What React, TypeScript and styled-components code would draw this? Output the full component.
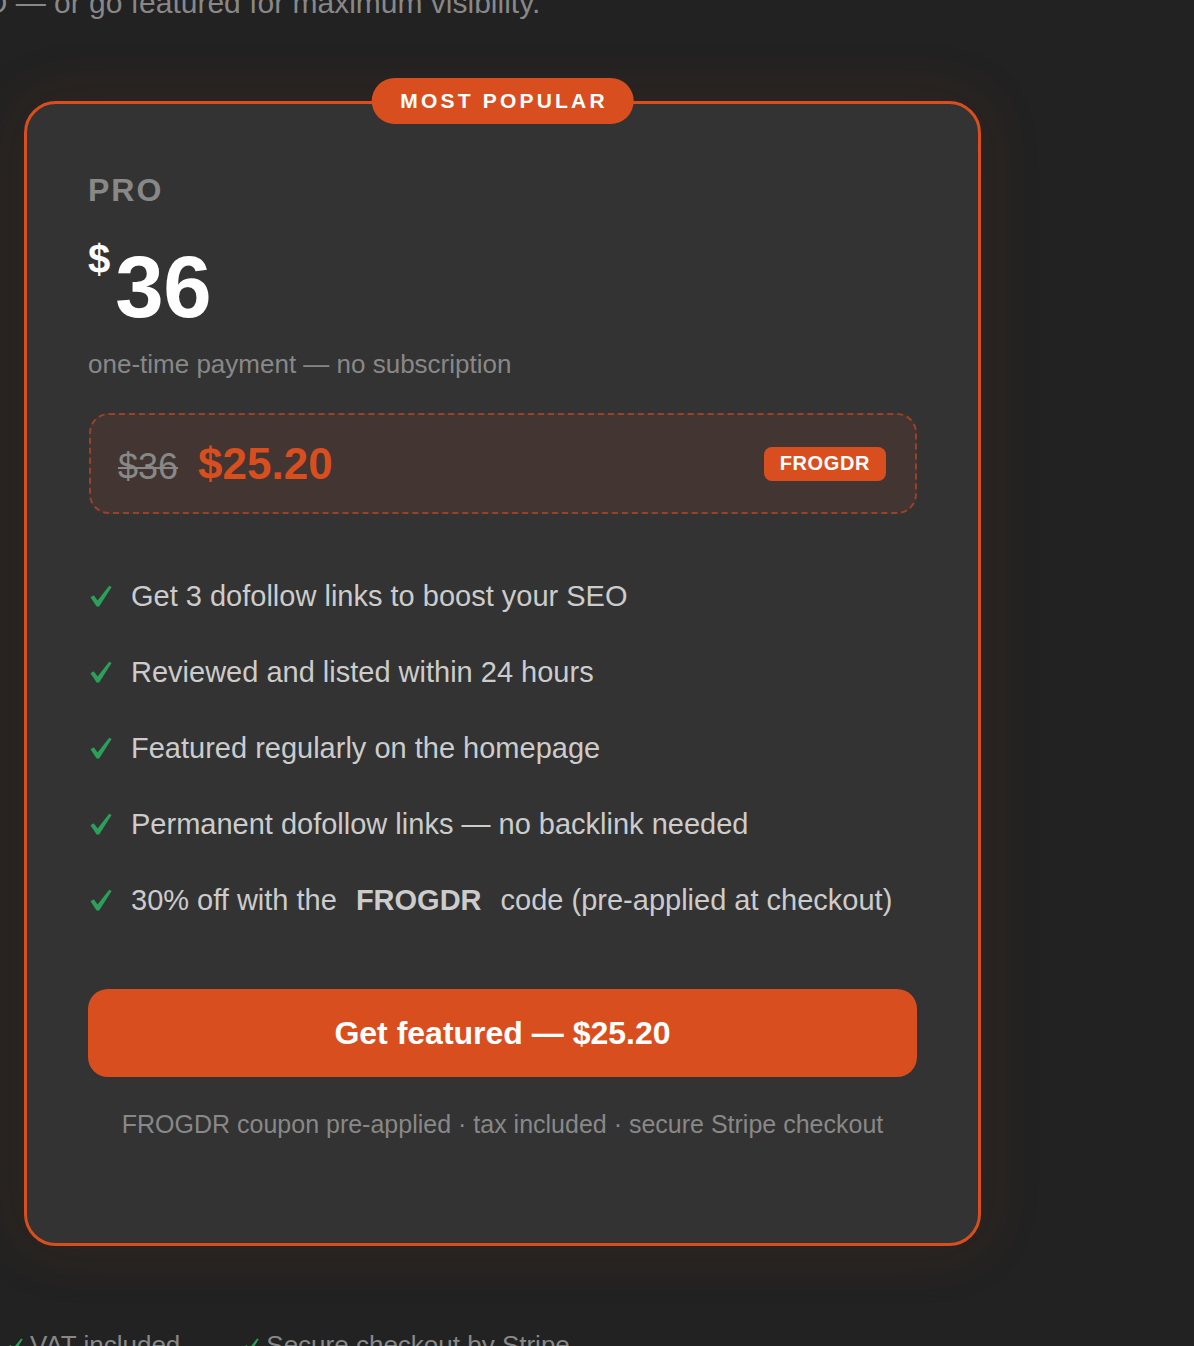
import React from 'react';
import styled, { createGlobalStyle } from 'styled-components';

const ORANGE = '#d94e1f';
const GREEN = '#2c9f5a';

const GlobalStyle = createGlobalStyle`
  html, body {
    margin: 0;
    padding: 0;
    background: #222222;
    overflow: hidden;
  }

  body {
    font-family: 'Liberation Sans', Arial, Helvetica, sans-serif;
    color: #cccccc;
  }
`;

const features = [
  'Get 3 dofollow links to boost your SEO',
  'Reviewed and listed within 24 hours',
  'Featured regularly on the homepage',
  'Permanent dofollow links — no backlink needed',
];

const Check: React.FC<{ size?: number }> = ({ size = 22 }) => (
  <svg width={size} height={size} viewBox="0 0 22 22" aria-hidden="true">
    <path
      d="M0.5 12.2 L3.8 10.2 L7.6 15.4 L19.2 0.8 L21.6 2 L9.2 21.4 L6.6 21.4 Z"
      fill={GREEN}
    />
  </svg>
);

const App: React.FC = () => (
  <>
    <GlobalStyle />
    <Page>
      <Lead>O — or go featured for maximum visibility.</Lead>

      <Card>
        <Badge>MOST POPULAR</Badge>

        <Tier>PRO</Tier>

        <PriceRow>
          <Currency>$</Currency>
          <Amount>36</Amount>
        </PriceRow>

        <Note>one-time payment — no subscription</Note>

        <Coupon>
          <Prices>
            <OldPrice>$36</OldPrice>
            <NewPrice>$25.20</NewPrice>
          </Prices>
          <Code>FROGDR</Code>
        </Coupon>

        <Features>
          {features.map((text) => (
            <Feature key={text}>
              <Check />
              <span>{text}</span>
            </Feature>
          ))}
          <Feature>
            <Check />
            <span>
              30% off with the <strong>FROGDR</strong> code (pre-applied at
              checkout)
            </span>
          </Feature>
        </Features>

        <CTA type="button">Get featured — $25.20</CTA>

        <Fine>
          FROGDR coupon pre-applied · tax included · secure Stripe checkout
        </Fine>
      </Card>

      <Assurances>
        <Assurance>
          <Check size={15} />
          <span>VAT included</span>
        </Assurance>
        <Assurance>
          <Check size={15} />
          <span>Secure checkout by Stripe</span>
        </Assurance>
      </Assurances>
    </Page>
  </>
);

const Page = styled.main`
  display: flex;
  flex-direction: column;
  align-items: flex-start;
  width: 1194px;
  height: 1346px;
  overflow: hidden;
`;

const Lead = styled.p`
  flex-shrink: 0;
  margin: -12px 0 0 -16px;
  font-size: 30px;
  line-height: 1;
  color: #888888;
  white-space: nowrap;
`;

const Card = styled.section`
  position: relative;
  flex-shrink: 0;
  box-sizing: border-box;
  width: 957px;
  height: 1145px;
  margin: 83px 0 0 24px;
  padding: 70px 61px 0;
  display: flex;
  flex-direction: column;
  background: #333333;
  border: 3px solid ${ORANGE};
  border-radius: 32px;
  box-shadow: 0 0 60px 12px rgba(217, 78, 31, 0.07);
`;

const Badge = styled.span`
  position: absolute;
  top: -26px;
  left: 50%;
  transform: translateX(-50%);
  box-sizing: border-box;
  height: 46px;
  padding: 0 26px 0 29px;
  display: flex;
  align-items: center;
  background: ${ORANGE};
  border-radius: 23px;
  color: #ffffff;
  font-size: 21px;
  font-weight: 700;
  letter-spacing: 3.2px;
  white-space: nowrap;
`;

const Tier = styled.h3`
  margin: 0;
  font-size: 32px;
  line-height: 1;
  font-weight: 700;
  letter-spacing: 2px;
  color: #888888;
`;

const PriceRow = styled.div`
  display: flex;
  align-items: flex-start;
  margin-top: 33px;
  color: #ffffff;
  font-weight: 700;
`;

const Currency = styled.span`
  font-size: 40px;
  line-height: 1;
  margin-right: 5px;
`;

const Amount = styled.span`
  margin-top: 4px;
  font-size: 87px;
  line-height: 1;
  letter-spacing: -0.5px;
`;

const Note = styled.p`
  margin: 21px 0 0;
  font-size: 26px;
  line-height: 1;
  color: #888888;
`;

const Coupon = styled.div`
  box-sizing: border-box;
  height: 101px;
  margin: 36px 0 0 1px;
  padding: 0 29px 0 27px;
  display: flex;
  align-items: center;
  justify-content: space-between;
  background: #433532;
  border: 2px dashed #9a4228;
  border-radius: 20px;
`;

const Prices = styled.div`
  display: flex;
  align-items: baseline;
  gap: 20px;
`;

const OldPrice = styled.s`
  font-size: 36px;
  color: #888888;
  text-decoration-thickness: 2px;
`;

const NewPrice = styled.span`
  font-size: 44px;
  font-weight: 700;
  color: ${ORANGE};
`;

const Code = styled.span`
  box-sizing: border-box;
  height: 34px;
  padding: 0 16px;
  display: flex;
  align-items: center;
  background: ${ORANGE};
  border-radius: 8px;
  color: #ffffff;
  font-size: 20px;
  font-weight: 700;
  letter-spacing: 0.6px;
`;

const Features = styled.ul`
  list-style: none;
  margin: 62px 0 0;
  padding: 0;
  display: flex;
  flex-direction: column;
  gap: 36px;
`;

const Feature = styled.li`
  display: flex;
  align-items: center;
  gap: 19px;
  height: 40px;
  padding-left: 2px;
  font-size: 29px;
  line-height: 40px;
  color: #cccccc;
  white-space: nowrap;

  strong {
    margin: 0 11px;
    font-weight: 700;
  }
`;

const CTA = styled.button`
  flex-shrink: 0;
  margin-top: 69px;
  height: 88px;
  width: 100%;
  border: none;
  border-radius: 20px;
  background: ${ORANGE};
  color: #ffffff;
  font-family: inherit;
  font-size: 32px;
  font-weight: 700;
  cursor: pointer;
`;

const Fine = styled.p`
  margin: 35px 0 0;
  font-size: 25px;
  line-height: 1;
  text-align: center;
  color: #888888;
`;

const Assurances = styled.div`
  flex-shrink: 0;
  display: flex;
  gap: 64px;
  margin: 86px 0 0 8px;
`;

const Assurance = styled.div`
  display: flex;
  align-items: flex-start;
  gap: 7px;
  font-size: 26px;
  line-height: 1;
  color: #888888;

  svg {
    margin-top: 6px;
  }
`;

export default App;
